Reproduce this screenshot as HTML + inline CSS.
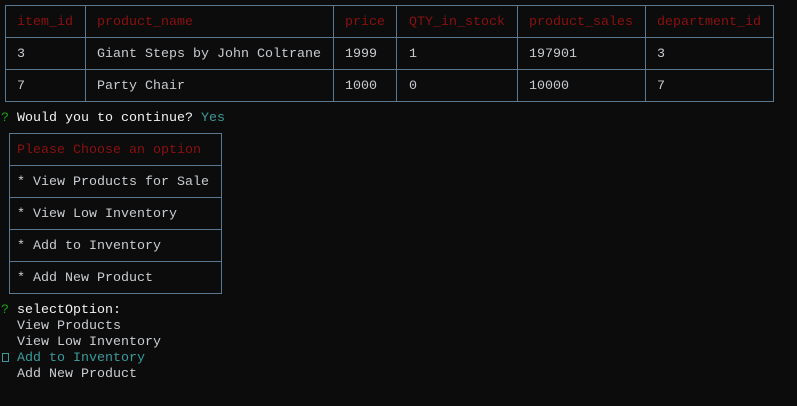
<!DOCTYPE html><html><head><style>
body{margin:0;width:797px;height:406px;background:#0c0c0c;overflow:hidden;font-family:"Liberation Mono",monospace;font-size:13.33px;color:#c8ccd0;position:relative}
.a{position:absolute;white-space:pre;line-height:16px;margin-top:2px}
.b{position:absolute;border:1px solid #5a7892;box-sizing:border-box}
.r{color:#8b1010}.c{color:#3a9a9a}.g{color:#13a10e}.w{color:#f2f2f2}
</style></head><body>
<div class="b" style="left:5px;top:5px;width:769px;height:97px"></div>
<div class="b" style="left:5px;top:37px;width:769px;height:33px;border-left:0;border-right:0"></div>
<div class="b" style="left:85px;top:5px;width:1px;height:97px;border-width:0 0 0 1px"></div>
<div class="b" style="left:333px;top:5px;width:1px;height:97px;border-width:0 0 0 1px"></div>
<div class="b" style="left:396px;top:5px;width:1px;height:97px;border-width:0 0 0 1px"></div>
<div class="b" style="left:517px;top:5px;width:1px;height:97px;border-width:0 0 0 1px"></div>
<div class="b" style="left:645px;top:5px;width:1px;height:97px;border-width:0 0 0 1px"></div>
<div class="a r" style="left:17px;top:13px">item_id</div>
<div class="a r" style="left:97px;top:13px">product_name</div>
<div class="a r" style="left:345px;top:13px">price</div>
<div class="a r" style="left:409px;top:13px">QTY_in_stock</div>
<div class="a r" style="left:529px;top:13px">product_sales</div>
<div class="a r" style="left:657px;top:13px">department_id</div>
<div class="a" style="left:17px;top:45px">3</div>
<div class="a" style="left:97px;top:45px">Giant Steps by John Coltrane</div>
<div class="a" style="left:345px;top:45px">1999</div>
<div class="a" style="left:409px;top:45px">1</div>
<div class="a" style="left:529px;top:45px">197901</div>
<div class="a" style="left:657px;top:45px">3</div>
<div class="a" style="left:17px;top:77px">7</div>
<div class="a" style="left:97px;top:77px">Party Chair</div>
<div class="a" style="left:345px;top:77px">1000</div>
<div class="a" style="left:409px;top:77px">0</div>
<div class="a" style="left:529px;top:77px">10000</div>
<div class="a" style="left:657px;top:77px">7</div>
<div class="a" style="left:1px;top:109px"><span class="g">?</span> <span class="w">Would you to continue?</span> <span class="c">Yes</span></div>
<div class="b" style="left:9px;top:133px;width:213px;height:161px"></div>
<div class="b" style="left:9px;top:165px;width:213px;height:33px;border-left:0;border-right:0"></div>
<div class="b" style="left:9px;top:229px;width:213px;height:33px;border-left:0;border-right:0"></div>
<div class="a r" style="left:17px;top:141px">Please Choose an option</div>
<div class="a" style="left:17px;top:173px">* View Products for Sale</div>
<div class="a" style="left:17px;top:205px">* View Low Inventory</div>
<div class="a" style="left:17px;top:237px">* Add to Inventory</div>
<div class="a" style="left:17px;top:269px">* Add New Product</div>
<div class="a" style="left:1px;top:301px"><span class="g">?</span> <span class="w">selectOption:</span></div>
<div class="a" style="left:17px;top:317px">View Products</div>
<div class="a" style="left:17px;top:333px">View Low Inventory</div>
<div style="position:absolute;left:2px;top:353px;width:5px;height:7px;border:1px solid #3a9a9a"></div>
<div class="a c" style="left:17px;top:349px">Add to Inventory</div>
<div class="a" style="left:17px;top:365px">Add New Product</div>
</body></html>
